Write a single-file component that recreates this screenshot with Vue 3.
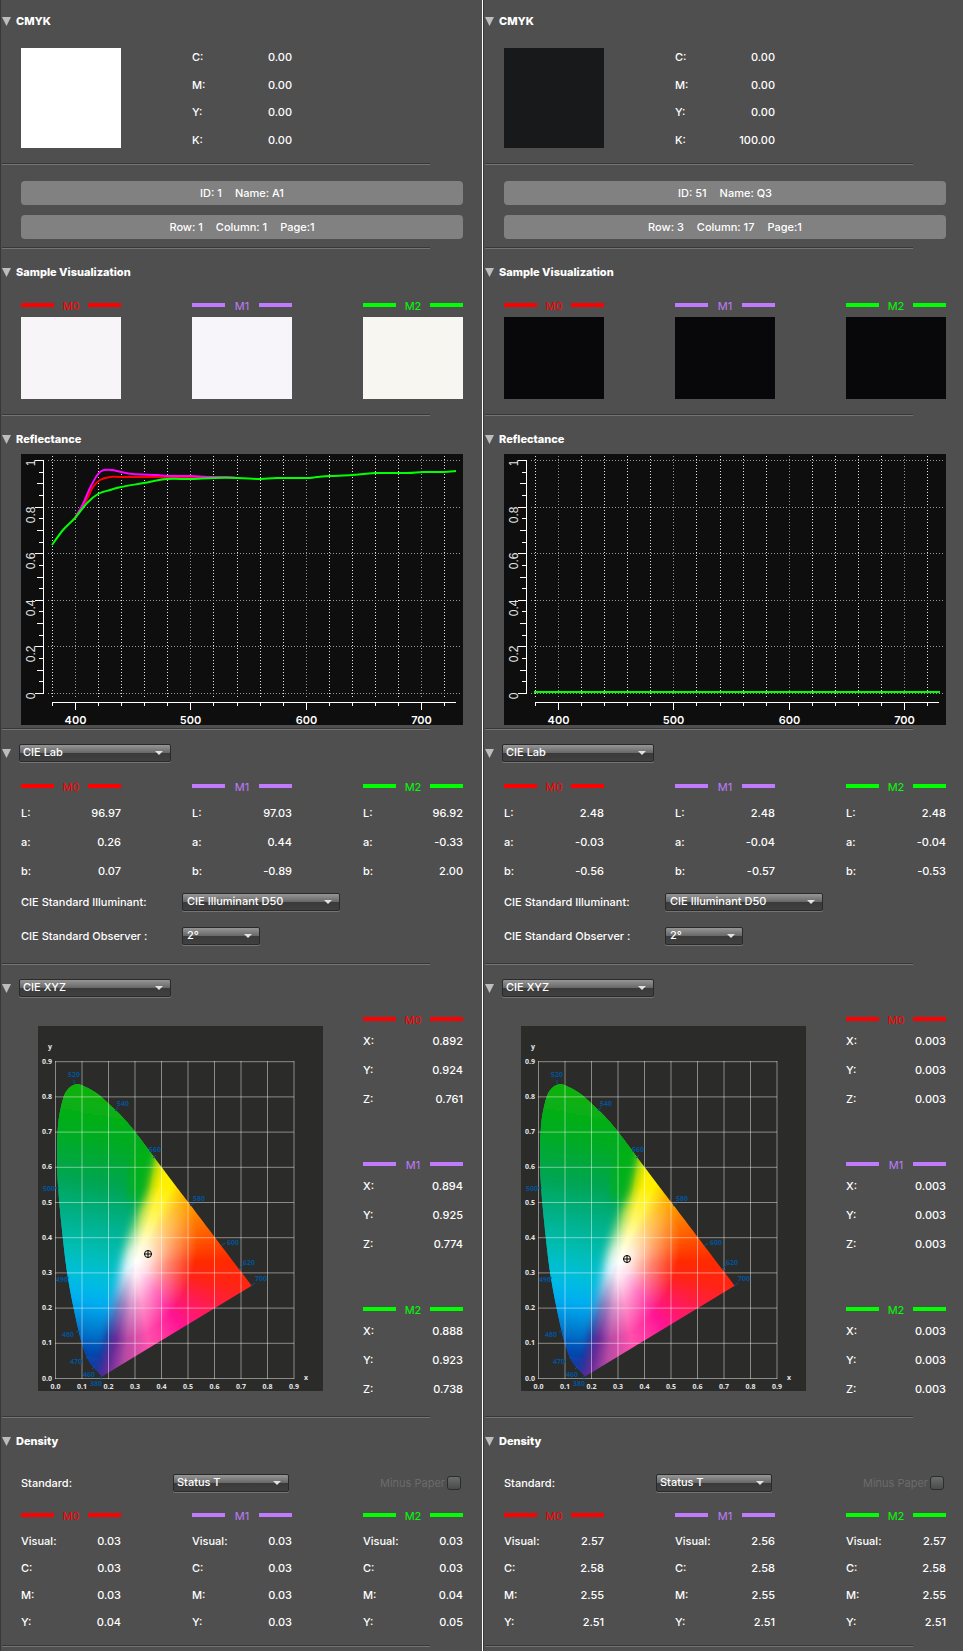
<script setup>
import { reactive } from 'vue'

const modes = ['M0', 'M1', 'M2']

const panels = reactive([
  {
    key: 'a',
    cmyk: [['C:', '0.00'], ['M:', '0.00'], ['Y:', '0.00'], ['K:', '0.00']],
    tone: 'paper',
    ident: ['ID: 1', 'Name: A1'],
    place: ['Row: 1', 'Column: 1', 'Page:1'],
    lab: [
      ['96.97', '0.26', '0.07'],
      ['97.03', '0.44', '-0.89'],
      ['96.92', '-0.33', '2.00'],
    ],
    xyz: [
      ['0.892', '0.924', '0.761'],
      ['0.894', '0.925', '0.774'],
      ['0.888', '0.923', '0.738'],
    ],
    density: [
      ['0.03', '0.03', '0.03', '0.04'],
      ['0.03', '0.03', '0.03', '0.03'],
      ['0.03', '0.03', '0.04', '0.05'],
    ],
    marker: [110, 228],
    curves: [
      { color: '#ff0000', pts: [[54, 64], [66, 45], [72, 33], [79, 26], [89, 23], [100, 23], [136, 23], [146, 24], [170, 24], [193, 24]] },
      { color: '#ff00ff', pts: [[54, 64], [62, 50], [69, 34], [77, 20], [83, 16], [91, 16], [100, 18], [112, 20], [136, 21], [146, 22], [170, 22], [186, 23], [206, 23], [217, 24]] },
      { color: '#00ff00', pts: [[31, 91], [42, 76], [54, 64], [66, 49], [77, 40], [89, 36], [100, 33], [123, 29], [146, 25], [170, 25], [193, 24], [217, 24], [239, 25], [256, 24], [285, 24], [296, 23], [309, 22], [331, 21], [354, 19], [386, 19], [402, 18], [422, 18], [435, 17]] },
    ],
    closed: {},
  },
  {
    key: 'b',
    cmyk: [['C:', '0.00'], ['M:', '0.00'], ['Y:', '0.00'], ['K:', '100.00']],
    tone: 'ink',
    ident: ['ID: 51', 'Name: Q3'],
    place: ['Row: 3', 'Column: 17', 'Page:1'],
    lab: [
      ['2.48', '-0.03', '-0.56'],
      ['2.48', '-0.04', '-0.57'],
      ['2.48', '-0.04', '-0.53'],
    ],
    xyz: [
      ['0.003', '0.003', '0.003'],
      ['0.003', '0.003', '0.003'],
      ['0.003', '0.003', '0.003'],
    ],
    density: [
      ['2.57', '2.58', '2.55', '2.51'],
      ['2.56', '2.58', '2.55', '2.51'],
      ['2.57', '2.58', '2.55', '2.51'],
    ],
    marker: [106, 233],
    curves: [{ color: '#00ff00', pts: [[30, 238], [436, 238]] }],
    closed: {},
  },
])

const labKeys = ['L:', 'a:', 'b:']
const xyzKeys = ['X:', 'Y:', 'Z:']
const densityKeys = ['Visual:', 'C:', 'M:', 'Y:']

/* Reflectance plot: 380–730 nm across, 0–1 up */
const gridX = Array.from({ length: 18 }, (_, i) => ({
  nm: 380 + i * 20,
  x: Math.floor(31.5 + i * 23.07) + 0.5,
}))
const ticksY = Array.from({ length: 21 }, (_, i) => ({
  label: i % 4 === 0 ? String(i / 20) : '',
  i,
  y: Math.floor(239.5 - i * 11.65) + 0.5,
}))
const tickStart = (i) => (i % 4 === 0 ? 14 : i % 2 === 0 ? 16 : 18)

function smooth(p) {
  let d = `M${p[0][0]} ${p[0][1]}`
  for (let i = 0; i < p.length - 1; i++) {
    const a = p[i - 1] || p[i]
    const b = p[i]
    const c = p[i + 1]
    const e = p[i + 2] || c
    d += ` C${b[0] + (c[0] - a[0]) / 6} ${b[1] + (c[1] - a[1]) / 6} ${c[0] - (e[0] - b[0]) / 6} ${c[1] - (e[1] - b[1]) / 6} ${c[0]} ${c[1]}`
  }
  return d
}

/* Chromaticity diagram */
const steps = Array.from({ length: 10 }, (_, i) => ({
  label: (i / 10).toFixed(1),
  x: 17.5 + i * 26.5,
  y: 352.5 - i * 35.2,
}))
const locus = smooth([
  [64, 350.5], [52, 337], [44.3, 319], [36, 284], [28.7, 244], [23.7, 201], [20.3, 164], [19, 131],
  [20.3, 97], [25.3, 72], [31.3, 61.7], [38.7, 58.3], [44.7, 59.6], [58.7, 67.3], [70.7, 77.7],
  [83.7, 90.2], [97, 105.7], [123.3, 140.7], [150.3, 176.3], [213.7, 259.7],
]) + 'Z'
const waves = [
  { t: '520', x: 36, y: 51, m: 'M36 54v4' },
  { t: '540', x: 85, y: 80, m: 'M80 81l-3 4' },
  { t: '560', x: 117, y: 126, m: 'M118 129l-3 3' },
  { t: '580', x: 161, y: 175, m: 'M156 177l-4 3' },
  { t: '600', x: 195, y: 219, m: 'M187 217l-4 3' },
  { t: '620', x: 211, y: 239, m: 'M205 239l-4 4' },
  { t: '700', x: 223, y: 255, m: 'M217 257l-4 3' },
  { t: '500', x: 11, y: 165, m: 'M17 162h4' },
  { t: '490', x: 24, y: 256, m: 'M27 252h4' },
  { t: '480', x: 30, y: 311, m: 'M38 306l4-1' },
  { t: '470', x: 38, y: 338, m: 'M48 332l4-2' },
  { t: '460', x: 51, y: 351, m: 'M54 343l3-3' },
  { t: '380', x: 58, y: 360, m: 'M63 354v-4' },
]
</script>

<template>
  <main class="compare">
    <section v-for="p in panels" :key="p.key" class="panel">
      <div class="head">
        <button type="button" class="fold" aria-label="Toggle CMYK" @click="p.closed.cmyk = !p.closed.cmyk">
          <svg viewBox="0 0 9 9"><path d="M0 0h9L4.5 9z" /></svg>
        </button>
        <h2>CMYK</h2>
      </div>
      <div v-if="!p.closed.cmyk" class="cmyk">
        <div class="patch" :class="p.tone"></div>
        <dl class="inks">
          <div v-for="r in p.cmyk" :key="r[0]" class="pair"><dt>{{ r[0] }}</dt><dd>{{ r[1] }}</dd></div>
        </dl>
        <div class="spacer"></div>
      </div>
      <div class="rule"></div>

      <div class="tags">
        <p class="tag"><span v-for="t in p.ident" :key="t">{{ t }}</span></p>
        <p class="tag"><span v-for="t in p.place" :key="t">{{ t }}</span></p>
      </div>
      <div class="rule"></div>

      <div class="head">
        <button type="button" class="fold" aria-label="Toggle Sample Visualization" @click="p.closed.vis = !p.closed.vis">
          <svg viewBox="0 0 9 9"><path d="M0 0h9L4.5 9z" /></svg>
        </button>
        <h2>Sample Visualization</h2>
      </div>
      <div v-if="!p.closed.vis" class="trio vis">
        <div v-for="m in modes" :key="m" class="cell">
          <div class="legend" :class="m">{{ m }}</div>
          <div class="sample" :class="[p.tone, m]"></div>
        </div>
      </div>
      <div class="rule"></div>

      <div class="head">
        <button type="button" class="fold" aria-label="Toggle Reflectance" @click="p.closed.ref = !p.closed.ref">
          <svg viewBox="0 0 9 9"><path d="M0 0h9L4.5 9z" /></svg>
        </button>
        <h2>Reflectance</h2>
      </div>
      <svg v-if="!p.closed.ref" class="plot" viewBox="0 0 442 271" role="img" aria-label="Reflectance curve">
        <rect width="442" height="271" fill="#0e0e0e" />
        <g stroke-dasharray="1 2">
          <line v-for="g in gridX" :key="g.nm" :x1="g.x" :x2="g.x" y1="2" y2="243" :stroke="g.nm % 100 ? '#e6e6e6' : '#999'" />
          <template v-for="t in ticksY" :key="t.i">
            <line v-if="t.label" x1="27" x2="439" :y1="t.y" :y2="t.y" stroke="#999" />
          </template>
        </g>
        <g stroke="#fff">
          <line x1="22.5" x2="22.5" y1="6" y2="240" />
          <line v-for="t in ticksY" :key="t.i" :x1="tickStart(t.i)" x2="22" :y1="t.y" :y2="t.y" />
          <line x1="31" x2="435" y1="248.5" y2="248.5" />
          <line v-for="g in gridX" :key="g.nm" :x1="g.x" :x2="g.x" y1="248" :y2="g.nm % 100 ? 252 : 256" />
        </g>
        <template v-for="t in ticksY" :key="t.i">
          <text v-if="t.label" class="ylab" :transform="`translate(14 ${t.y - 1}) rotate(-90)`">{{ t.label }}</text>
        </template>
        <template v-for="g in gridX" :key="g.nm">
          <text v-if="g.nm % 100 === 0" class="xlab" :x="g.x" y="270">{{ g.nm }}</text>
        </template>
        <path v-for="c in p.curves" :key="c.color" :d="smooth(c.pts)" :stroke="c.color" stroke-width="2" fill="none" />
      </svg>
      <div class="rule tight"></div>

      <div class="head pick">
        <button type="button" class="fold" aria-label="Toggle CIE Lab" @click="p.closed.lab = !p.closed.lab">
          <svg viewBox="0 0 9 9"><path d="M0 0h9L4.5 9z" /></svg>
        </button>
        <span class="drop wide">
          <select aria-label="Color space"><option>CIE Lab</option><option>CIE LCh</option></select>
          <svg viewBox="0 0 8 4"><path d="M0 0h8L4 4z" /></svg>
        </span>
      </div>
      <div v-if="!p.closed.lab">
        <div class="trio lab">
          <div v-for="(m, i) in modes" :key="m" class="cell">
            <div class="legend" :class="m">{{ m }}</div>
            <dl class="values">
              <div v-for="(k, j) in labKeys" :key="k" class="pair"><dt>{{ k }}</dt><dd>{{ p.lab[i][j] }}</dd></div>
            </dl>
          </div>
        </div>
        <div class="field first">
          <label :for="'ill-' + p.key">CIE Standard Illuminant:</label>
          <span class="drop illum">
            <select :id="'ill-' + p.key"><option>CIE Illuminant D50</option><option>CIE Illuminant D65</option></select>
            <svg viewBox="0 0 8 4"><path d="M0 0h8L4 4z" /></svg>
          </span>
        </div>
        <div class="field">
          <label :for="'obs-' + p.key">CIE Standard Observer :</label>
          <span class="drop angle">
            <select :id="'obs-' + p.key"><option>2°</option><option>10°</option></select>
            <svg viewBox="0 0 8 4"><path d="M0 0h8L4 4z" /></svg>
          </span>
        </div>
      </div>
      <div class="rule after-fields"></div>

      <div class="head pick">
        <button type="button" class="fold" aria-label="Toggle CIE XYZ" @click="p.closed.xyz = !p.closed.xyz">
          <svg viewBox="0 0 9 9"><path d="M0 0h9L4.5 9z" /></svg>
        </button>
        <span class="drop wide">
          <select aria-label="Tristimulus space"><option>CIE XYZ</option><option>CIE xyY</option></select>
          <svg viewBox="0 0 8 4"><path d="M0 0h8L4 4z" /></svg>
        </span>
      </div>
      <div v-if="!p.closed.xyz" class="xyz">
        <svg class="gamut" viewBox="0 0 285 365" role="img" aria-label="Chromaticity diagram">
          <defs>
            <clipPath :id="'locus-' + p.key"><path :d="locus" /></clipPath>
            <radialGradient :id="'glow-' + p.key">
              <stop offset="0" stop-color="#fff" />
              <stop offset="0.2" stop-color="#fff" stop-opacity="0.85" />
              <stop offset="0.55" stop-color="#fff" stop-opacity="0.42" />
              <stop offset="1" stop-color="#fff" stop-opacity="0" />
            </radialGradient>
            <linearGradient :id="'cool-' + p.key" gradientUnits="userSpaceOnUse" x1="88" y1="62" x2="36" y2="350">
              <stop offset="0" stop-color="#0ab20a" />
              <stop offset="0.18" stop-color="#04ac1e" />
              <stop offset="0.34" stop-color="#00a552" />
              <stop offset="0.46" stop-color="#00b088" />
              <stop offset="0.57" stop-color="#00bdb4" />
              <stop offset="0.66" stop-color="#00bfdc" />
              <stop offset="0.74" stop-color="#00aef2" />
              <stop offset="0.84" stop-color="#0078cc" />
              <stop offset="0.91" stop-color="#0047ae" />
              <stop offset="1" stop-color="#26309a" />
            </linearGradient>
            <filter :id="'soft-' + p.key" x="-20%" y="-20%" width="140%" height="140%"><feGaussianBlur stdDeviation="5" /></filter>
          </defs>
          <rect width="285" height="365" fill="#2b2b29" />
          <g :clip-path="`url(#locus-${p.key})`">
            <foreignObject width="285" height="365"><div class="wheel"></div></foreignObject>
            <ellipse cx="100" cy="236" rx="80" ry="55" :fill="`url(#glow-${p.key})`" transform="rotate(-68 100 236)" />
            <path :filter="`url(#soft-${p.key})`" :fill="`url(#cool-${p.key})`" d="M-10 40H130L120 120L113 141L107 165L99 184L90 211L84 231L81 248L77 268L72 291L66 317L60 342L58 365H-10Z" />
            <ellipse cx="101" cy="148" rx="9" ry="30" fill="#00b800" opacity="0.6" :filter="`url(#soft-${p.key})`" transform="rotate(8 101 148)" />
          </g>
          <g stroke="#fff" stroke-opacity="0.45">
            <line v-for="s in steps" :key="'x' + s.label" :x1="s.x" :x2="s.x" y1="35" y2="353" />
            <line v-for="s in steps" :key="'y' + s.label" :y1="s.y" :y2="s.y" x1="17" x2="256" />
          </g>
          <g class="axis">
            <text v-for="s in steps" :key="'x' + s.label" :x="s.x" y="363" text-anchor="middle">{{ s.label }}</text>
            <text v-for="s in steps" :key="'y' + s.label" x="14" :y="s.y + 2" text-anchor="end">{{ s.label }}</text>
            <text x="12" y="23" text-anchor="middle">y</text>
            <text x="268" y="354" text-anchor="middle">x</text>
          </g>
          <g v-for="w in waves" :key="w.t" class="wave">
            <path :d="w.m" />
            <text :x="w.x" :y="w.y">{{ w.t }}</text>
          </g>
          <g fill="none" stroke="#000" :transform="`translate(${p.marker[0]} ${p.marker[1]})`">
            <circle r="3.5" />
            <path d="M-4 0h8M0 -4v8" />
          </g>
        </svg>
        <div class="tristim">
          <div v-for="(m, i) in modes" :key="m" class="cell">
            <div class="legend" :class="m">{{ m }}</div>
            <dl class="values">
              <div v-for="(k, j) in xyzKeys" :key="k" class="pair"><dt>{{ k }}</dt><dd>{{ p.xyz[i][j] }}</dd></div>
            </dl>
          </div>
        </div>
      </div>
      <div class="rule"></div>

      <div class="head">
        <button type="button" class="fold" aria-label="Toggle Density" @click="p.closed.den = !p.closed.den">
          <svg viewBox="0 0 9 9"><path d="M0 0h9L4.5 9z" /></svg>
        </button>
        <h2>Density</h2>
      </div>
      <div v-if="!p.closed.den">
        <div class="field standard">
          <label :for="'std-' + p.key">Standard:</label>
          <span class="drop status">
            <select :id="'std-' + p.key"><option>Status T</option><option>Status E</option></select>
            <svg viewBox="0 0 8 4"><path d="M0 0h8L4 4z" /></svg>
          </span>
          <label class="minus">Minus Paper<input type="checkbox" disabled /></label>
        </div>
        <div class="trio dens">
          <div v-for="(m, i) in modes" :key="m" class="cell">
            <div class="legend" :class="m">{{ m }}</div>
            <dl class="values">
              <div v-for="(k, j) in densityKeys" :key="k" class="pair"><dt>{{ k }}</dt><dd>{{ p.density[i][j] }}</dd></div>
            </dl>
          </div>
        </div>
      </div>
      <div class="rule"></div>
    </section>
  </main>
</template>

<style>
body {
  margin: 0;
  background: #4f4f4f;
}
</style>

<style scoped>
.compare {
  display: flex;
  min-height: 100vh;
  background: #4f4f4f;
  color: #fff;
  font: 500 11px/16px Inter, "Noto Sans", sans-serif;
}
.panel {
  flex: 1 1 0;
  min-width: 0;
  padding: 13px 17px 4px 20px;
  border-left: 1px solid #383838;
}
.panel:first-child {
  padding-right: 19px;
  border-right: 1px solid #fff;
}
h2, p, dl, dd {
  margin: 0;
}
h2 {
  font-size: 11px;
  line-height: 16px;
  font-weight: 800;
}
.head {
  display: flex;
  align-items: center;
  gap: 5px;
  height: 16px;
  margin-left: -19px;
}
.fold {
  width: 9px;
  height: 9px;
  padding: 0;
  border: 0;
  background: none;
}
.fold svg {
  display: block;
  width: 9px;
  height: 9px;
  fill: #bdbdbd;
}
.rule {
  height: 1px;
  margin: 15px 33px 0 -19px;
  border-top: 1px solid #383838;
  background: #747474;
}
.rule.tight {
  margin-top: 3px;
}
.rule.after-fields {
  margin-top: 18px;
}
.rule + .head {
  margin-top: 15px;
}
.rule + .head.pick {
  height: 18px;
  margin-top: 14px;
  gap: 8px;
}

.cmyk {
  display: flex;
  justify-content: space-between;
  margin-top: 19px;
}
.patch, .inks, .spacer {
  width: 100px;
}
.patch {
  height: 100px;
}
.patch.paper {
  background: #fff;
}
.patch.ink {
  background: #17191a;
}
.inks {
  display: flex;
  flex-direction: column;
  justify-content: space-between;
  box-sizing: border-box;
  padding-top: 1px;
}
.pair {
  display: flex;
  justify-content: space-between;
}
.tags {
  display: grid;
  gap: 10px;
  margin-top: 16px;
  margin-bottom: -7px;
}
.tag {
  display: flex;
  justify-content: center;
  gap: 13px;
  height: 24px;
  line-height: 24px;
  border-radius: 4px;
  background: #818181;
}

.trio {
  display: flex;
  justify-content: space-between;
}
.cell {
  width: 100px;
}
.legend {
  display: flex;
  align-items: center;
  justify-content: space-between;
  height: 16px;
  font-weight: 400;
}
.legend::before, .legend::after {
  content: "";
  width: 33px;
  height: 4px;
  margin-bottom: 2px;
  background: currentColor;
}
.legend.M0 { color: #ff0000; }
.legend.M1 { color: #bf7bfb; }
.legend.M2 { color: #00ff00; }
.vis {
  margin-top: 18px;
}
.sample {
  height: 82px;
  margin-top: 3px;
}
.sample.paper.M0 { background: #f7f5f7; }
.sample.paper.M1 { background: #f7f5fa; }
.sample.paper.M2 { background: #f7f6f1; }
.sample.ink { background: #08080a; }

.plot {
  display: block;
  width: 100%;
  margin-top: 7px;
  overflow: visible;
}
.xlab {
  fill: #fff;
  font: 600 11px Inter, sans-serif;
  text-anchor: middle;
}
.ylab {
  fill: #e4e4e4;
  font: 400 12px "Liberation Sans", sans-serif;
  text-anchor: end;
}

.lab {
  margin-top: 17px;
}
.values {
  display: grid;
  gap: 13px;
  margin-top: 10px;
}
.dens .values {
  gap: 11px;
  margin-top: 9px;
}
.tristim .values {
  margin-top: 5px;
}
.field {
  display: flex;
  align-items: center;
  height: 18px;
  margin-top: 16px;
}
.field label:first-child {
  width: 161px;
}
.field.first {
  margin-top: 14px;
}
.field.standard {
  margin-top: 25px;
}
.field.standard label:first-child {
  width: 152px;
}
.drop {
  position: relative;
  display: block;
}
.drop select {
  appearance: none;
  display: block;
  width: 100%;
  height: 18px;
  padding: 0 20px 2px 3px;
  border: 1px solid #2a2a2a;
  border-radius: 2px;
  background: linear-gradient(#969696, #666 50%, #3a3a3a 50%, #404040);
  box-shadow: 0 1px 0 #757575;
  color: #fff;
  font: 500 11px/14px Inter, "Noto Sans", sans-serif;
}
.drop.illum select, .drop.angle select {
  padding-left: 4px;
}
.drop svg {
  position: absolute;
  top: 7px;
  right: 8px;
  width: 8px;
  height: 4px;
  fill: #e2e2e2;
  pointer-events: none;
}
.wide { width: 152px; }
.illum { width: 158px; }
.angle { width: 78px; }
.status { width: 116px; }
.minus {
  display: flex;
  align-items: center;
  gap: 2px;
  margin-left: auto;
  margin-right: 2px;
  color: #6b6b6b;
  font-weight: 400;
}
.minus input {
  appearance: none;
  box-sizing: border-box;
  width: 14px;
  height: 14px;
  margin: 0;
  border: 1px solid #2c2c2c;
  border-radius: 3px;
  background: linear-gradient(#6a6c6c, #4a4c4c);
}

.xyz {
  display: flex;
  align-items: flex-start;
  justify-content: space-between;
  margin-top: 15px;
  margin-bottom: 19px;
}
.gamut {
  display: block;
  width: 285px;
  margin-top: 14px;
  margin-left: 17px;
}
.wheel {
  width: 285px;
  height: 365px;
  background: conic-gradient(from 0deg at 97px 238px, #40c000 0deg, #b8dc00 11deg, #fff000 18deg, #fff000 25deg, #ffb400 36deg, #ff7c00 54deg, #ff5000 72deg, #ff2a00 88deg, #ff2414 102deg, #ff1c50 120deg, #ff1493 144deg, #ff50ac 170deg, #b84aa4 186deg, #6a2c98 194deg, #2a3098 202deg, #00a8f0 240deg, #00b090 300deg, #40c000 360deg);
}
.tristim {
  display: grid;
  gap: 50px;
}
.axis text {
  fill: #e6e6e6;
  font: 700 7px "Open Sans", sans-serif;
}
.wave text {
  fill: #00549c;
  font: 700 7px "Open Sans", sans-serif;
  text-anchor: middle;
}
.wave path {
  stroke: #00549c;
}
.dens {
  margin-top: 16px;
}
</style>
